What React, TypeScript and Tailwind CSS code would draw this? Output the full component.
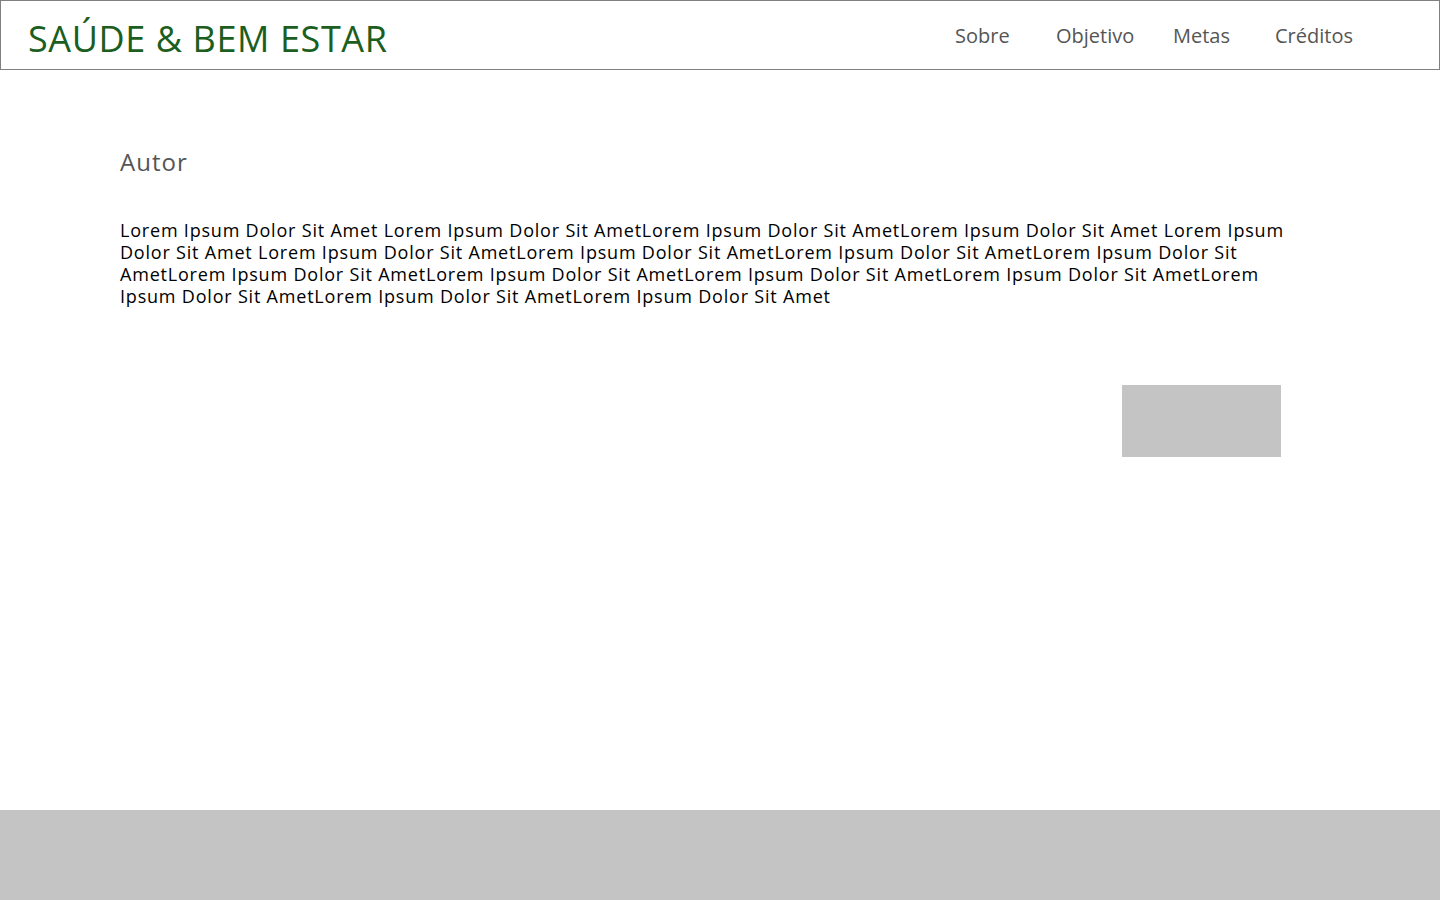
const NAV = [
  { label: 'Sobre', w: 'w-[101px]' },
  { label: 'Objetivo', w: 'w-[117px]' },
  { label: 'Metas', w: 'w-[102px]' },
  { label: 'Créditos', w: '' },
];

const LOREM =
  'Lorem Ipsum Dolor Sit Amet Lorem Ipsum Dolor Sit AmetLorem Ipsum Dolor Sit AmetLorem Ipsum Dolor Sit Amet Lorem Ipsum Dolor Sit Amet Lorem Ipsum Dolor Sit AmetLorem Ipsum Dolor Sit AmetLorem Ipsum Dolor Sit AmetLorem Ipsum Dolor Sit AmetLorem Ipsum Dolor Sit AmetLorem Ipsum Dolor Sit AmetLorem Ipsum Dolor Sit AmetLorem Ipsum Dolor Sit AmetLorem Ipsum Dolor Sit AmetLorem Ipsum Dolor Sit AmetLorem Ipsum Dolor Sit Amet';

export default function App() {
  return (
    <div className="min-h-[900px] flex flex-col bg-white font-['Open_Sans',sans-serif]">
      {/* cabeçalho */}
      <header className="h-[70px] border border-[#7f7f7f] flex items-center justify-between pl-[27px] pr-[86px]">
        <h1 className="text-[36px] leading-[44px] text-[#1b5e20] tracking-[0.6px] pt-[7px]">SAÚDE &amp; BEM ESTAR</h1>
        <nav className="flex items-center text-[20px] text-[#555555] pt-[2px]">
          {NAV.map(n => (
            <a key={n.label} className={n.w}>{n.label}</a>
          ))}
        </nav>
      </header>

      <main className="flex-1 px-[120px] pt-[77px]">
        <h2 className="text-[24px] leading-[30px] tracking-[1px] text-[#555555]">Autor</h2>
        <p className="mt-[42px] w-[1190px] text-[18px] leading-[22px] tracking-[0.8px] text-black">{LOREM}</p>
        <div className="flex justify-end w-[1161px] mt-[78px]">
          <div className="w-[159px] h-[72px] bg-[#c4c4c4]" />
        </div>
      </main>

      <footer className="h-[90px] bg-[#c4c4c4]" />
    </div>
  );
}
